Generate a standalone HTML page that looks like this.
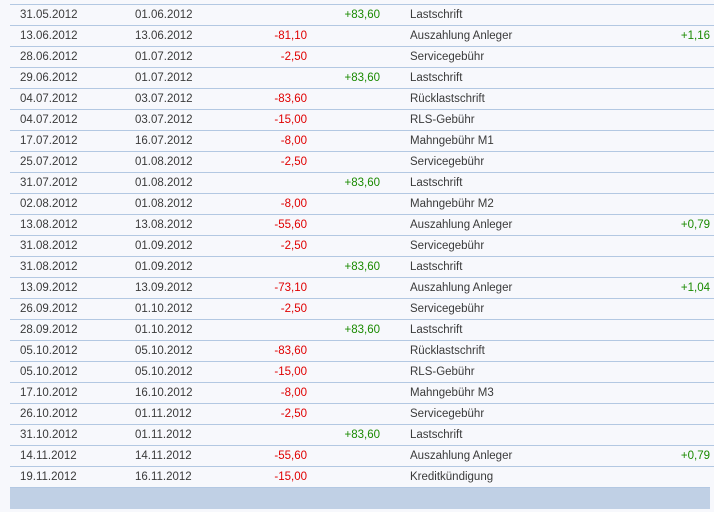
<!DOCTYPE html>
<html><head><meta charset="utf-8"><style>
body{margin:0;width:714px;height:512px;background:#f7f8fc;overflow:hidden;font-family:"Liberation Sans",sans-serif;font-size:11.5px;color:#3a3a3a;position:relative}
.r{position:absolute;left:10px;width:704px;height:20px;border-top:1px solid #b3c8e2}
.r span{position:absolute;top:4px;white-space:nowrap}
.a{left:10px}.b{left:125px}
.n{right:407px;text-align:right;color:#e00000}
.p{right:334px;text-align:right;color:#1a8a00}
.d{left:400px}
.e{right:4px;color:#1a8a00}
.f{position:absolute;left:10px;top:487px;width:700px;height:21px;background:#c0d0e5;border-top:1px solid #b3c8e2}
</style></head><body>
<div class="r" style="top:4px"><span class="a">31.05.2012</span><span class="b">01.06.2012</span><span class="p">+83,60</span><span class="d">Lastschrift</span></div>
<div class="r" style="top:25px"><span class="a">13.06.2012</span><span class="b">13.06.2012</span><span class="n">-81,10</span><span class="d">Auszahlung Anleger</span><span class="e">+1,16</span></div>
<div class="r" style="top:46px"><span class="a">28.06.2012</span><span class="b">01.07.2012</span><span class="n">-2,50</span><span class="d">Servicegebühr</span></div>
<div class="r" style="top:67px"><span class="a">29.06.2012</span><span class="b">01.07.2012</span><span class="p">+83,60</span><span class="d">Lastschrift</span></div>
<div class="r" style="top:88px"><span class="a">04.07.2012</span><span class="b">03.07.2012</span><span class="n">-83,60</span><span class="d">Rücklastschrift</span></div>
<div class="r" style="top:109px"><span class="a">04.07.2012</span><span class="b">03.07.2012</span><span class="n">-15,00</span><span class="d">RLS-Gebühr</span></div>
<div class="r" style="top:130px"><span class="a">17.07.2012</span><span class="b">16.07.2012</span><span class="n">-8,00</span><span class="d">Mahngebühr M1</span></div>
<div class="r" style="top:151px"><span class="a">25.07.2012</span><span class="b">01.08.2012</span><span class="n">-2,50</span><span class="d">Servicegebühr</span></div>
<div class="r" style="top:172px"><span class="a">31.07.2012</span><span class="b">01.08.2012</span><span class="p">+83,60</span><span class="d">Lastschrift</span></div>
<div class="r" style="top:193px"><span class="a">02.08.2012</span><span class="b">01.08.2012</span><span class="n">-8,00</span><span class="d">Mahngebühr M2</span></div>
<div class="r" style="top:214px"><span class="a">13.08.2012</span><span class="b">13.08.2012</span><span class="n">-55,60</span><span class="d">Auszahlung Anleger</span><span class="e">+0,79</span></div>
<div class="r" style="top:235px"><span class="a">31.08.2012</span><span class="b">01.09.2012</span><span class="n">-2,50</span><span class="d">Servicegebühr</span></div>
<div class="r" style="top:256px"><span class="a">31.08.2012</span><span class="b">01.09.2012</span><span class="p">+83,60</span><span class="d">Lastschrift</span></div>
<div class="r" style="top:277px"><span class="a">13.09.2012</span><span class="b">13.09.2012</span><span class="n">-73,10</span><span class="d">Auszahlung Anleger</span><span class="e">+1,04</span></div>
<div class="r" style="top:298px"><span class="a">26.09.2012</span><span class="b">01.10.2012</span><span class="n">-2,50</span><span class="d">Servicegebühr</span></div>
<div class="r" style="top:319px"><span class="a">28.09.2012</span><span class="b">01.10.2012</span><span class="p">+83,60</span><span class="d">Lastschrift</span></div>
<div class="r" style="top:340px"><span class="a">05.10.2012</span><span class="b">05.10.2012</span><span class="n">-83,60</span><span class="d">Rücklastschrift</span></div>
<div class="r" style="top:361px"><span class="a">05.10.2012</span><span class="b">05.10.2012</span><span class="n">-15,00</span><span class="d">RLS-Gebühr</span></div>
<div class="r" style="top:382px"><span class="a">17.10.2012</span><span class="b">16.10.2012</span><span class="n">-8,00</span><span class="d">Mahngebühr M3</span></div>
<div class="r" style="top:403px"><span class="a">26.10.2012</span><span class="b">01.11.2012</span><span class="n">-2,50</span><span class="d">Servicegebühr</span></div>
<div class="r" style="top:424px"><span class="a">31.10.2012</span><span class="b">01.11.2012</span><span class="p">+83,60</span><span class="d">Lastschrift</span></div>
<div class="r" style="top:445px"><span class="a">14.11.2012</span><span class="b">14.11.2012</span><span class="n">-55,60</span><span class="d">Auszahlung Anleger</span><span class="e">+0,79</span></div>
<div class="r" style="top:466px"><span class="a">19.11.2012</span><span class="b">16.11.2012</span><span class="n">-15,00</span><span class="d">Kreditkündigung</span></div>
<div class="f"></div>
</body></html>
